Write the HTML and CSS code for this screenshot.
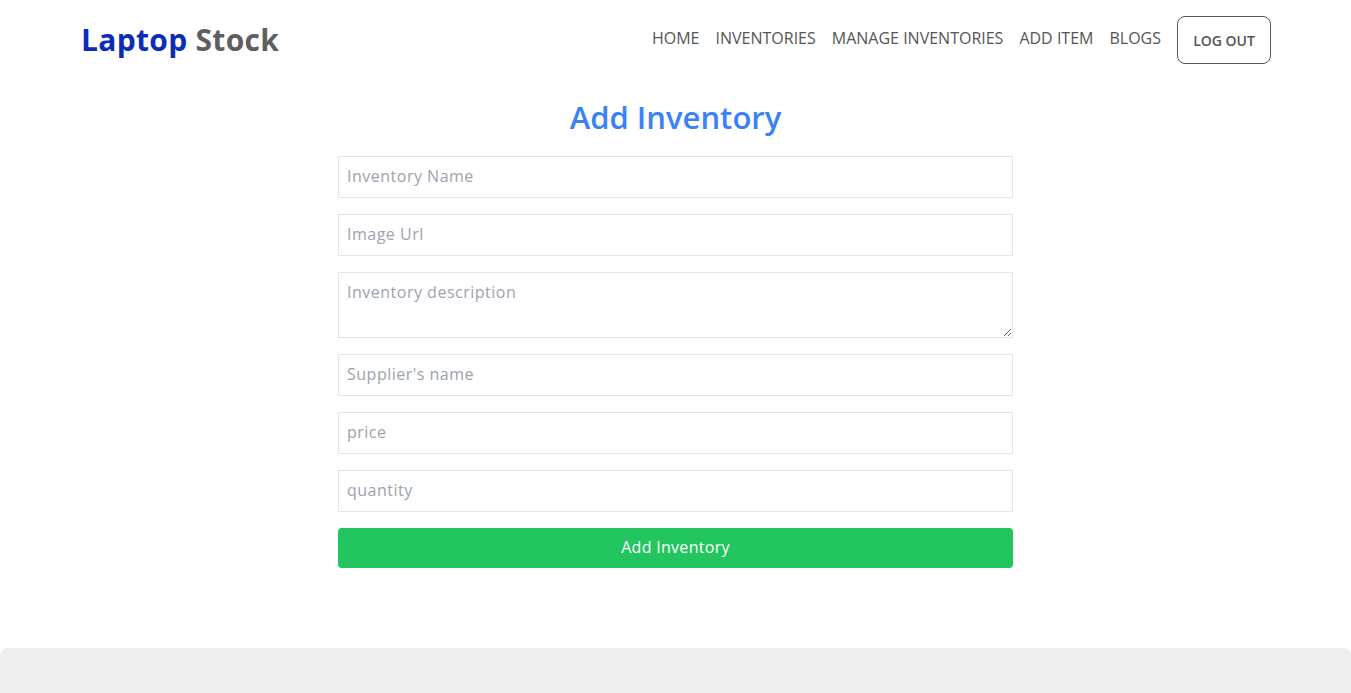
FILE: index.html
```html
<!DOCTYPE html>
<html lang="en">
<head>
<meta charset="utf-8">
<title>Laptop Stock - Add Inventory</title>
<link rel="stylesheet" href="styles.css">
</head>
<body>
<header class="header">
  <a class="logo" href="#"><span class="logo-a">Laptop</span> <span class="logo-b">Stock</span></a>
  <nav class="nav">
    <a href="#">HOME</a>
    <a href="#">INVENTORIES</a>
    <a href="#">MANAGE INVENTORIES</a>
    <a href="#">ADD ITEM</a>
    <a href="#">BLOGS</a>
    <button class="logout">LOG OUT</button>
  </nav>
</header>
<main class="main">
  <h1 class="title">Add Inventory</h1>
  <form class="form">
    <input class="field" type="text" placeholder="Inventory Name">
    <input class="field" type="text" placeholder="Image Url">
    <textarea class="field area" placeholder="Inventory description"></textarea>
    <input class="field" type="text" placeholder="Supplier's name">
    <input class="field" type="text" placeholder="price">
    <input class="field" type="text" placeholder="quantity">
    <button class="submit" type="button">Add Inventory</button>
  </form>
</main>
<footer class="footer">
  <p class="copy">Copyright &copy; 2022 Laptop Stock. All rights reserved</p>
</footer>
</body>
</html>
```
FILE: styles.css
```css
* { box-sizing: border-box; }
body {
  margin: 0;
  font-family: "Open Sans", "Noto Sans", sans-serif;
  color: #555;
  background: #fff;
}
a { text-decoration: none; }
.header {
  display: flex;
  align-items: center;
  justify-content: space-between;
  height: 80px;
  padding: 0 80px 0 81px;
}
.logo {
  font-size: 30px;
  font-weight: 700;
  letter-spacing: 0.3px;
  margin-top: -2px;
}
.logo-a { color: #0a2db8; }
.logo-b { color: #5f5f5f; }
.nav {
  display: flex;
  align-items: center;
  gap: 16px;
}
.nav a {
  color: #555;
  font-size: 16px;
  font-weight: 500;
  margin-top: -4px;
}
.logout {
  width: 94px;
  height: 48px;
  border: 1px solid #555;
  border-radius: 8px;
  background: #fff;
  color: #555;
  font-family: inherit;
  font-size: 14px;
  font-weight: 600;
  padding: 0;
}
.main {
  display: flex;
  flex-direction: column;
  align-items: center;
  padding-bottom: 80px;
}
.title {
  margin: 17px 0 19px;
  color: #3b82f6;
  font-size: 31px;
  font-weight: 600;
  line-height: 40px;
}
.form {
  width: 675px;
  display: flex;
  flex-direction: column;
  gap: 16px;
}
.field {
  height: 42px;
  border: 1px solid #e5e5e5;
  padding: 0 8px 2px;
  font-family: inherit;
  font-size: 16px;
  letter-spacing: 0.5px;
  color: #333;
  outline: none;
}
.field::placeholder { color: #9ca3af; }
.area {
  height: 66px;
  padding: 8px 8px;
  resize: vertical;
}
.submit {
  height: 40px;
  border: none;
  border-radius: 4px;
  background: #22c55e;
  color: #fff;
  font-family: inherit;
  font-size: 16px;
  letter-spacing: 0.3px;
  padding: 0 0 2px;
}
.footer {
  background: #eee;
  border-radius: 8px 8px 0 0;
  padding: 42px 0 40px;
  text-align: center;
}
.copy {
  margin: 0;
  font-size: 15px;
  color: #555;
}
```
